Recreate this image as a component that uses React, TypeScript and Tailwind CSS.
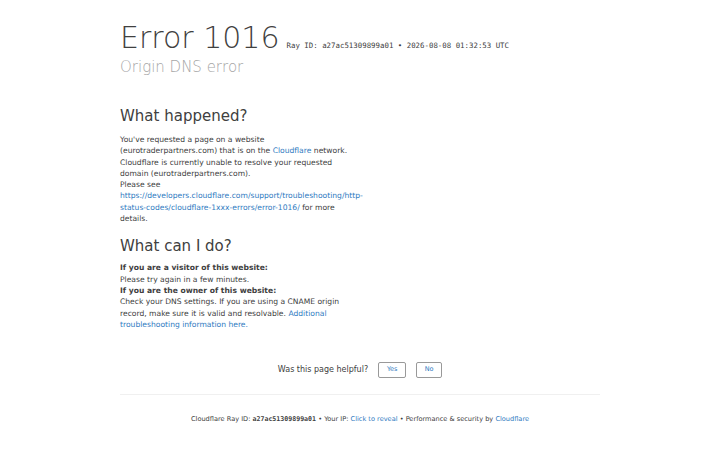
export default function App() {
  return (
    <div className="min-h-screen bg-white font-['DejaVu_Sans',sans-serif] text-[#404040]">
      <div className="mx-auto w-[480px] pt-[19px]">
        {/* header */}
        <div className="flex items-end">
          <h1 className="text-[30px] font-extralight leading-[38px] text-[#404040]">Error 1016</h1>
          <span className="mb-[6px] ml-[7px] font-['DejaVu_Sans_Mono',monospace] text-[7.4px] text-[#404040]">
            Ray ID: a27ac51309899a01 • 2026-08-08 01:32:53 UTC
          </span>
        </div>
        <h2 className="text-[15px] font-extralight leading-[20px] text-[#a6a6a6]">Origin DNS error</h2>

        {/* content */}
        <div className="mt-[28px] w-[240px]">
          <h2 className="text-[15px] leading-[22px]">What happened?</h2>
          <p className="mt-[7px] text-[7.6px] leading-[11.3px] text-[#404040]">
            You've requested a page on a website (eurotraderpartners.com) that is on the{' '}
            <a className="text-[#2f7bbf]">Cloudflare</a> network. Cloudflare is currently unable to resolve your
            requested domain (eurotraderpartners.com).
            <br />
            Please see{' '}
            <a className="text-[#2f7bbf]">
              https://developers.cloudflare.com/support/troubleshooting/http-status-codes/cloudflare-1xxx-errors/error-1016/
            </a>{' '}
            for more details.
          </p>

          <h2 className="mt-[11px] text-[15px] leading-[22px]">What can I do?</h2>
          <div className="mt-[5px] text-[7.6px] leading-[11.3px]">
            <p className="font-bold">If you are a visitor of this website:</p>
            <p>Please try again in a few minutes.</p>
            <p className="font-bold">If you are the owner of this website:</p>
            <p>
              Check your DNS settings. If you are using a CNAME origin record, make sure it is valid and resolvable.{' '}
              <a className="text-[#2f7bbf]">Additional troubleshooting information here.</a>
            </p>
          </div>
        </div>

        {/* feedback */}
        <div className="mt-[32px] flex items-center justify-center gap-[10px] text-[8px]">
          <span>Was this page helpful?</span>
          <button className="h-[16px] w-[28px] rounded-[2px] border border-[#999] text-[6.5px] text-[#2f7bbf]">Yes</button>
          <button className="h-[16px] w-[26px] rounded-[2px] border border-[#999] text-[6.5px] text-[#2f7bbf]">No</button>
        </div>

        {/* footer */}
        <div className="mt-[16px] border-t border-[#f0f0f0] pt-[20px] text-center text-[6.6px] text-[#404040]">
          Cloudflare Ray ID: <strong className="font-['DejaVu_Sans_Mono',monospace] font-bold">a27ac51309899a01</strong>
          {' '}• Your IP: <a className="text-[#2f7bbf]">Click to reveal</a> • Performance &amp; security by{' '}
          <a className="text-[#2f7bbf]">Cloudflare</a>
        </div>
      </div>
    </div>
  );
}
